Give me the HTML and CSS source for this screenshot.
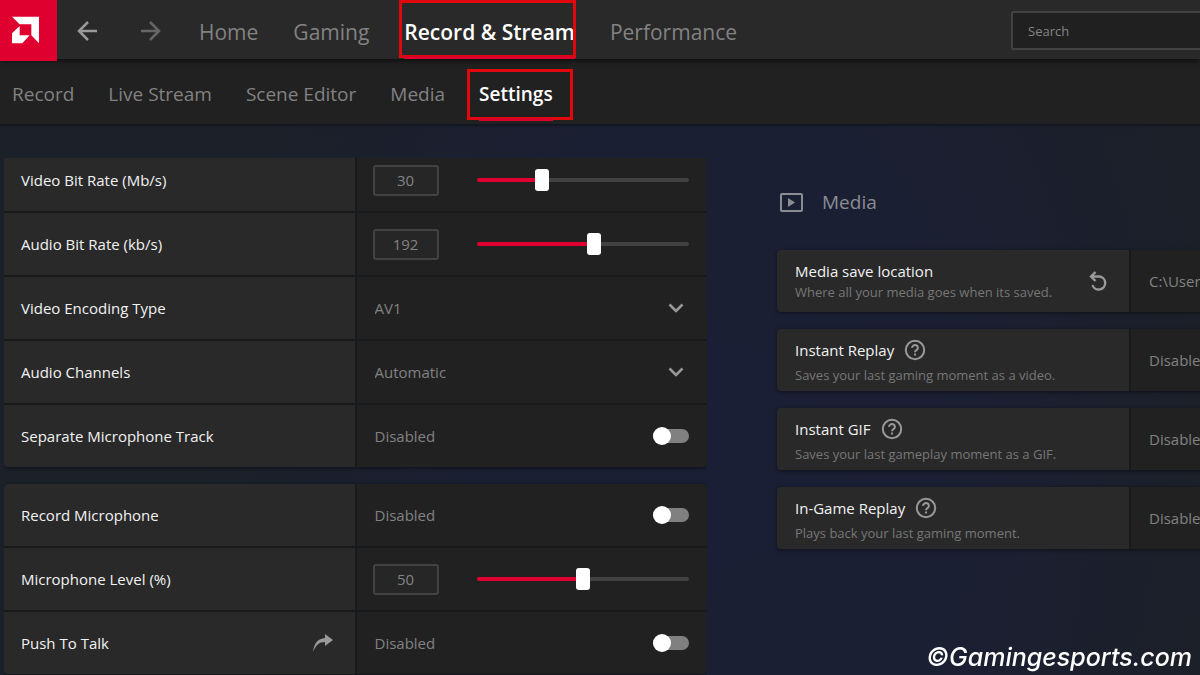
FILE: index.html
```html
<!DOCTYPE html>
<html lang="en">
<head>
<meta charset="utf-8">
<title>Record &amp; Stream Settings</title>
<link rel="stylesheet" href="styles.css">
</head>
<body>
<svg class="sprite" aria-hidden="true">
  <symbol id="chevron" viewBox="0 0 16 10"><path d="M1.5 1.5 8 8l6.500-6.500" fill="none" stroke="currentColor" stroke-width="2.500"/></symbol>
  <symbol id="help" viewBox="0 0 22 22"><circle cx="11" cy="11" r="9.200" fill="none" stroke="currentColor" stroke-width="2"/><path d="M8.100 8.900a2.900 2.700 0 1 1 4.800 1.900c-1 .9-1.900 1.300-1.900 2.500" fill="none" stroke="currentColor" stroke-width="2"/><path d="M10 14.400h2v2h-2z" fill="currentColor"/></symbol>
</svg>

<header class="topbar">
  <a class="logo" href="#" aria-label="AMD home">
    <svg viewBox="0 0 171 183"><path d="M36 50H117V130L94 106V73H59ZM59 78V106H89L67 130H36V100Z" fill="#fff"/></svg>
  </a>
  <div class="history">
    <button class="icon-button" type="button" aria-label="Back"><svg viewBox="0 0 20 20"><path d="M20 10H2M11 1 2 10l9 9" fill="none" stroke="currentColor" stroke-width="2.500"/></svg></button>
    <button class="icon-button is-dim" type="button" aria-label="Forward"><svg viewBox="0 0 20 20"><path d="M0 10h18M9 1l9 9-9 9" fill="none" stroke="currentColor" stroke-width="2.500"/></svg></button>
  </div>
  <nav class="tabs tabs-main" aria-label="Main">
    <a href="#">Home</a>
    <a href="#">Gaming</a>
    <a class="active" href="#">Record &amp; Stream</a>
    <a href="#">Performance</a>
  </nav>
  <input class="search" type="search" placeholder="Search" aria-label="Search">
</header>

<nav class="tabs tabs-sub" aria-label="Record and stream">
  <a href="#">Record</a>
  <a href="#">Live Stream</a>
  <a href="#">Scene Editor</a>
  <a href="#">Media</a>
  <a class="active" href="#">Settings</a>
</nav>

<main class="content">
  <section class="column recording">
    <div class="group">
      <div class="row">
        <label class="cell name" for="video-rate">Video Bit Rate (Mb/s)</label>
        <div class="cell value"><input class="number" type="text" value="30" aria-label="Video bit rate value"><input class="slider" id="video-rate" type="range" min="1" max="100" value="30" style="--fill: 30%"></div>
      </div>
      <div class="row">
        <label class="cell name" for="audio-rate">Audio Bit Rate (kb/s)</label>
        <div class="cell value"><input class="number" type="text" value="192" aria-label="Audio bit rate value"><input class="slider" id="audio-rate" type="range" min="32" max="320" value="192" style="--fill: 55%"></div>
      </div>
      <div class="row">
        <label class="cell name" for="encoding">Video Encoding Type</label>
        <div class="cell value picker"><select id="encoding"><option>AV1</option><option>HEVC</option><option>AVC</option></select><svg class="chevron"><use href="#chevron"/></svg></div>
      </div>
      <div class="row">
        <label class="cell name" for="channels">Audio Channels</label>
        <div class="cell value picker"><select id="channels"><option>Automatic</option><option>Mono</option><option>Stereo</option></select><svg class="chevron"><use href="#chevron"/></svg></div>
      </div>
      <div class="row">
        <label class="cell name" for="separate">Separate Microphone Track</label>
        <div class="cell value"><span>Disabled</span><input class="toggle" id="separate" type="checkbox"></div>
      </div>
    </div>
    <div class="group">
      <div class="row">
        <label class="cell name" for="record-mic">Record Microphone</label>
        <div class="cell value"><span>Disabled</span><input class="toggle" id="record-mic" type="checkbox"></div>
      </div>
      <div class="row">
        <label class="cell name" for="mic-level">Microphone Level (%)</label>
        <div class="cell value"><input class="number" type="text" value="50" aria-label="Microphone level value"><input class="slider" id="mic-level" type="range" min="0" max="100" value="50" style="--fill: 50%"></div>
      </div>
      <div class="row">
        <div class="cell name"><label for="push">Push To Talk</label><button class="icon-button share" type="button" aria-label="Open hotkeys"><svg viewBox="0 0 20 18"><path d="M0 18C1 9 5 4.500 12 4V0l8 6-8 6V8C6 8 3 11 0 18Z" fill="currentColor"/></svg></button></div>
        <div class="cell value"><span>Disabled</span><input class="toggle" id="push" type="checkbox"></div>
      </div>
    </div>
  </section>

  <section class="column media">
    <h2 class="heading"><svg viewBox="0 0 23 19"><rect x="1" y="1" width="21" height="17" rx="1" fill="none" stroke="currentColor" stroke-width="2"/><path d="M8 5v9l7-4.500z" fill="currentColor"/></svg>Media</h2>
    <div class="cards">
      <div class="row">
        <div class="cell name">
          <div class="text"><h3>Media save location</h3><p>Where all your media goes when its saved.</p></div>
          <button class="icon-button reset" type="button" aria-label="Reset location"><svg viewBox="0 0 18 20"><path d="M2.500 5.500H10a6.500 6.500 0 1 1-6.500 8.500M6.500 1 2 5.500l4.500 4.500" fill="none" stroke="currentColor" stroke-width="2.400"/></svg></button>
        </div>
        <div class="cell value"><span>C:\Users</span></div>
      </div>
      <div class="row">
        <div class="cell name"><div class="text has-help"><h3><label for="replay">Instant Replay</label><svg class="help"><use href="#help"/></svg></h3><p>Saves your last gaming moment as a video.</p></div></div>
        <div class="cell value"><span>Disabled</span><input class="toggle" id="replay" type="checkbox"></div>
      </div>
      <div class="row">
        <div class="cell name"><div class="text has-help"><h3><label for="gif">Instant GIF</label><svg class="help"><use href="#help"/></svg></h3><p>Saves your last gameplay moment as a GIF.</p></div></div>
        <div class="cell value"><span>Disabled</span><input class="toggle" id="gif" type="checkbox"></div>
      </div>
      <div class="row">
        <div class="cell name"><div class="text has-help"><h3><label for="ingame">In-Game Replay</label><svg class="help"><use href="#help"/></svg></h3><p>Plays back your last gaming moment.</p></div></div>
        <div class="cell value"><span>Disabled</span><input class="toggle" id="ingame" type="checkbox"></div>
      </div>
    </div>
  </section>
</main>
<div class="watermark">©Gamingesports.com</div>
</body>
</html>
```
FILE: styles.css
```css
* { box-sizing: border-box; }
:root {
  --red: #e00030;
  --panel: #292929;
  --panel-dark: #212121;
  --line: #191a1b;
  --muted: #828282;
}
body {
  display: flex;
  flex-direction: column;
  height: 100vh;
  margin: 0;
  overflow: hidden;
  background: #1c2028;
  color: #f2f2f2;
  font: 15px/20px "Open Sans", "Noto Sans", sans-serif;
}
h2, h3, p { margin: 0; font-weight: 400; }
a { color: inherit; text-decoration: none; }
input, select, button { margin: 0; color: inherit; font: inherit; }
.sprite { display: none; }
.icon-button {
  display: flex;
  padding: 0;
  border: 0;
  background: none;
  color: #999;
}
.icon-button svg { width: 20px; height: 20px; }
.icon-button.is-dim { color: #666; }

.topbar {
  position: relative;
  z-index: 2;
  display: flex;
  flex: none;
  align-items: center;
  height: 59px;
  background: #292929;
  box-shadow: 0 2px 5px rgba(0, 0, 0, .6);
}
.logo {
  flex: none;
  align-self: flex-start;
  width: 57px;
  height: 61px;
  background: var(--red);
}
.logo svg { display: block; width: 57px; height: 61px; }
.history { display: flex; flex: none; gap: 44px; padding: 0 38px 0 20px; margin-top: 2px; }

.tabs { display: flex; color: #828282; white-space: nowrap; }
.tabs a { position: relative; display: flex; align-items: center; }
.tabs .active { color: #fff; font-weight: 600; }
.tabs .active::before {
  content: "";
  position: absolute;
  border: 3px solid #e0080c;
}
.tabs .active::after {
  content: "";
  position: absolute;
  left: 0;
  right: 0;
  bottom: 0;
  height: 3px;
  background: #dc0028;
}
.tabs-main { gap: 35px; height: 59px; padding-top: 5px; font-size: 21px; }
.tabs-main a { height: 54px; }
.tabs-main .active::before { inset: -5px -1px 1px -5px; }
.tabs-sub {
  flex: none;
  gap: 34px;
  height: 65px;
  padding: 7px 12px 3px;
  background: #212121;
  box-shadow: 0 1px 3px rgba(0, 0, 0, .5);
  font-size: 19px;
  z-index: 1;
}
.tabs-sub .active::before { inset: 3px -20px 1px -12px; }

.search {
  flex: none;
  width: 260px;
  height: 39px;
  margin: 2px -71px 0 auto;
  padding: 0 15px;
  border: 2px solid #424242;
  border-radius: 2px;
  background: #202020;
  font-size: 13px;
}
.search::placeholder { color: #858585; opacity: 1; }

.content {
  display: flex;
  flex: 1;
  gap: 70px;
  min-height: 0;
  padding: 34px 4px 0;
  overflow: hidden;
  background: radial-gradient(ellipse 520px 760px at 60% 60%, #1b1f36 0%, #1b1f32 50%, #1c2028 100%);
}
.column { flex: 1 0 703px; min-height: 0; }
.recording { overflow: hidden; }
.group {
  display: grid;
  gap: 2px;
  overflow: hidden;
  border-radius: 4px;
  background: var(--line);
  box-shadow: 0 1px 4px rgba(0, 0, 0, .5);
}
.group:first-child { margin: -9px 0 17px; }
.row { display: grid; grid-template-columns: 1fr 1fr; gap: 2px; min-height: 62px; }
.cell { display: flex; align-items: center; min-width: 0; }
.name { justify-content: space-between; padding: 0 22px 0 17px; background: var(--panel); }
.value { justify-content: space-between; padding: 0 18px; background: var(--panel-dark); color: var(--muted); }

.number {
  width: 66px;
  height: 31px;
  margin-left: -2px;
  padding: 0;
  border: 2px solid #424242;
  border-radius: 3px;
  background: #262626;
  text-align: center;
}
.slider {
  width: 212px;
  height: 24px;
  appearance: none;
  background: none;
}
.slider::-webkit-slider-runnable-track {
  height: 4px;
  border-radius: 2px;
  background: linear-gradient(to right, var(--red) var(--fill), #424242 var(--fill));
}
.slider::-webkit-slider-thumb {
  width: 14px;
  height: 22px;
  margin-top: -9px;
  border-radius: 3px;
  background: #fff;
  appearance: none;
}
.picker { display: grid; grid-template-columns: 1fr; align-items: stretch; justify-content: stretch; padding: 0; }
.picker > * { grid-area: 1 / 1; }
.picker select {
  width: 100%;
  padding: 0 44px 0 18px;
  border: 0;
  appearance: none;
  background: none;
}
.chevron {
  align-self: center;
  justify-self: end;
  width: 16px;
  height: 10px;
  margin-right: 23px;
  color: #999;
  pointer-events: none;
}
.toggle {
  display: flex;
  align-items: center;
  width: 36px;
  height: 14px;
  border-radius: 7px;
  appearance: none;
  background: #808080;
}
.toggle::before {
  content: "";
  width: 18px;
  height: 18px;
  border-radius: 50%;
  background: #fff;
}
.toggle:checked { justify-content: flex-end; background: var(--red); }
.share svg { height: 18px; }

.media { flex-basis: 706px; }
.heading {
  display: flex;
  align-items: center;
  gap: 19px;
  height: 92px;
  padding: 0 0 4px 3px;
  color: #8b8d93;
  font-size: 19px;
  font-weight: 500;
}
.heading svg { width: 23px; height: 19px; }
.cards { display: grid; gap: 17px; }
.cards .row {
  overflow: hidden;
  border-radius: 4px;
  background: var(--line);
  box-shadow: 0 1px 4px rgba(0, 0, 0, .5);
}
.cards .name { padding-left: 18px; }
.text p { color: #777; font-size: 13px; }
.text h3 { display: flex; align-items: center; gap: 10px; font-size: 15px; line-height: 22px; }
.has-help h3 { line-height: 30px; }
.help { width: 22px; height: 22px; color: #999; }
.reset svg { width: 18px; }

.watermark {
  position: fixed;
  right: 8px;
  bottom: 3px;
  color: #fff;
  font: italic 500 25px/30px Inter, sans-serif;
}
```
